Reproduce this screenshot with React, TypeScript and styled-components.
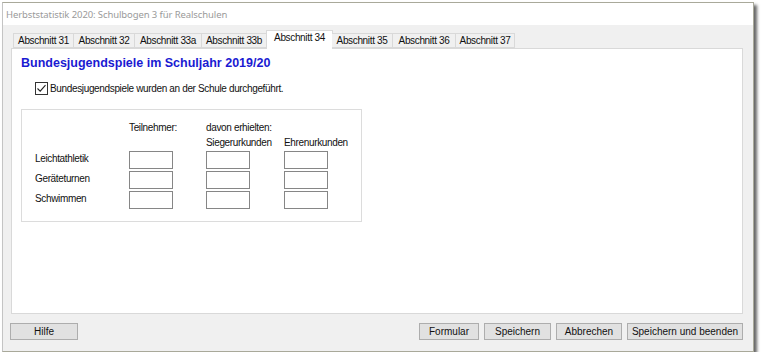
import React, {useState} from 'react';
import styled, {createGlobalStyle} from "styled-components";

const GlobalStyle = createGlobalStyle`
  html, body {
    margin: 0;
    padding: 0;
    background: #ffffff;
  }
  body {
    font-family: "Liberation Sans", Arial, sans-serif;
    font-size: 10px;
    letter-spacing: -0.35px;
    color: #111;
  }
`

const StyledWindow = styled.div`
  box-sizing: border-box;
  margin: 2px 0 0 2px;
  width: 752px;
  height: 350px;
  border: 1px solid #a9a99a;
  border-left-color: #c4c4c4;
  display: flex;
  flex-direction: column;
  box-shadow: 3px 3px 3px rgba(0, 0, 0, 0.6);
  background: #f0f0f0;
`

const StyledTitleBar = styled.div`
  height: 22px;
  flex-shrink: 0;
  background: #ffffff;
  display: flex;
  align-items: center;
  padding-left: 3px;
  font-family: "Noto Sans", "Open Sans", sans-serif;
  font-size: 9.5px;
  letter-spacing: -0.1px;
  color: #9a9a9a;
`

const StyledBody = styled.div`
  flex: 1;
  display: flex;
  flex-direction: column;
  padding: 5px 10px 11px 8px;
  min-height: 0;
`

const StyledTabRow = styled.div`
  display: flex;
  align-items: flex-end;
  height: 18px;
  padding-left: 2px;
  position: relative;
  z-index: 1;
`

const StyledTab = styled.div<{ $active?: boolean; $width: number }>`
  box-sizing: border-box;
  width: ${p => p.$width}px;
  height: ${p => p.$active ? 19 : 15}px;
  margin-bottom: ${p => p.$active ? -1 : 0}px;
  margin-left: ${p => p.$active ? -1 : 0}px;
  margin-right: ${p => p.$active ? -1 : 0}px;
  border: 1px solid #d9d9d9;
  border-bottom: ${p => p.$active ? "none" : "1px solid #d9d9d9"};
  border-left: ${p => p.$active ? "1px solid #d9d9d9" : "none"};
  background: ${p => p.$active ? "#ffffff" : "#f0f0f0"};
  display: flex;
  align-items: ${p => p.$active ? "flex-start" : "center"};
  padding-top: ${p => p.$active ? 1 : 0}px;
  justify-content: center;
  white-space: nowrap;

  &:first-child {
    border-left: 1px solid #d9d9d9;
  }
`

const StyledPanel = styled.div`
  flex: 1;
  box-sizing: border-box;
  background: #ffffff;
  border: 1px solid #d9d9d9;
  padding: 7px 9px;
  display: flex;
  flex-direction: column;
  align-items: flex-start;
`

const StyledHeading = styled.h1`
  margin: 0;
  font-size: 12.5px;
  line-height: 15px;
  font-weight: bold;
  letter-spacing: 0;
  color: #1a1ad2;
`

const StyledCheckRow = styled.label`
  display: flex;
  align-items: center;
  gap: 2px;
  margin: 11px 0 0 14px;
  height: 13px;
  cursor: pointer;
`

const StyledCheckBox = styled.span`
  box-sizing: border-box;
  width: 13px;
  height: 13px;
  border: 1px solid #333333;
  background: #ffffff;
  display: flex;
  align-items: center;
  justify-content: center;
`

const StyledGroup = styled.div`
  box-sizing: border-box;
  margin-top: 14px;
  width: 341px;
  height: 113px;
  border: 1px solid #dcdcdc;
  padding: 13px 0 0 13px;
  display: grid;
  grid-template-columns: 94px 77px 78px 1fr;
  grid-template-rows: 12px 12px 18px 18px 18px;
  row-gap: 2px;
  align-items: center;
`

const StyledCell = styled.div<{ $row: number; $col: number; $lift?: number }>`
  grid-row: ${p => p.$row};
  grid-column: ${p => p.$col};
  margin-top: ${p => -(p.$lift || 0)}px;
  white-space: nowrap;
  line-height: 12px;
`

const StyledInput = styled.input`
  box-sizing: border-box;
  width: 44px;
  height: 18px;
  margin: 0;
  border: 1px solid #868686;
  background: #ffffff;
  font: inherit;
  padding: 0 2px;
  outline: none;
`

const StyledButtonRow = styled.div`
  display: flex;
  align-items: center;
  gap: 5px;
  margin: 9px 0 0 -1px;
  height: 17px;
`

const StyledButton = styled.button<{ $width: number }>`
  box-sizing: border-box;
  width: ${p => p.$width}px;
  height: 17px;
  padding: 0;
  border: 1px solid #adadad;
  background: #e1e1e1;
  font: inherit;
  color: #111;
  cursor: pointer;
`

const StyledSpacer = styled.div`
  flex: 1;
`

const tabs = [
    {label: "Abschnitt 31", width: 61},
    {label: "Abschnitt 32", width: 61},
    {label: "Abschnitt 33a", width: 67},
    {label: "Abschnitt 33b", width: 65},
    {label: "Abschnitt 34", width: 67},
    {label: "Abschnitt 35", width: 61},
    {label: "Abschnitt 36", width: 63},
    {label: "Abschnitt 37", width: 59},
]

const sports = ["Leichtathletik", "Geräteturnen", "Schwimmen"]

const App: React.FC = () => {
    const [active, setActive] = useState(4)
    const [checked, setChecked] = useState(true)

    return (
        <>
            <GlobalStyle/>
            <StyledWindow>
                <StyledTitleBar>{"Herbststatistik 2020: Schulbogen 3 für Realschulen"}</StyledTitleBar>
                <StyledBody>
                    <StyledTabRow>
                        {tabs.map((tab, i) => (
                            <StyledTab key={tab.label} $width={tab.width} $active={i === active}
                                       onClick={() => setActive(i)}>
                                {tab.label}
                            </StyledTab>
                        ))}
                    </StyledTabRow>
                    <StyledPanel>
                        <StyledHeading>{"Bundesjugendspiele im Schuljahr 2019/20"}</StyledHeading>
                        <StyledCheckRow onClick={() => setChecked(!checked)}>
                            <StyledCheckBox>
                                {checked && (
                                    <svg width="11" height="11" viewBox="0 0 11 11">
                                        <path d="M1.5 5.5 L4.2 8.2 L9.5 2.2" fill="none" stroke="#222" strokeWidth="1.1"/>
                                    </svg>
                                )}
                            </StyledCheckBox>
                            {"Bundesjugendspiele wurden an der Schule durchgeführt."}
                        </StyledCheckRow>
                        <StyledGroup>
                            <StyledCell $row={1} $col={2} $lift={2}>{"Teilnehmer:"}</StyledCell>
                            <StyledCell $row={1} $col={3} $lift={2}>{"davon erhielten:"}</StyledCell>
                            <StyledCell $row={2} $col={3}>{"Siegerurkunden"}</StyledCell>
                            <StyledCell $row={2} $col={4}>{"Ehrenurkunden"}</StyledCell>
                            {sports.map((sport, i) => (
                                <React.Fragment key={sport}>
                                    <StyledCell $row={i + 3} $col={1} $lift={2}>{sport}</StyledCell>
                                    <StyledCell $row={i + 3} $col={2}><StyledInput type={"text"}/></StyledCell>
                                    <StyledCell $row={i + 3} $col={3}><StyledInput type={"text"}/></StyledCell>
                                    <StyledCell $row={i + 3} $col={4}><StyledInput type={"text"}/></StyledCell>
                                </React.Fragment>
                            ))}
                        </StyledGroup>
                    </StyledPanel>
                    <StyledButtonRow>
                        <StyledButton $width={68}>{"Hilfe"}</StyledButton>
                        <StyledSpacer/>
                        <StyledButton $width={60}>{"Formular"}</StyledButton>
                        <StyledButton $width={67}>{"Speichern"}</StyledButton>
                        <StyledButton $width={66}>{"Abbrechen"}</StyledButton>
                        <StyledButton $width={116}>{"Speichern und beenden"}</StyledButton>
                    </StyledButtonRow>
                </StyledBody>
            </StyledWindow>
        </>
    );
};

export default App;
